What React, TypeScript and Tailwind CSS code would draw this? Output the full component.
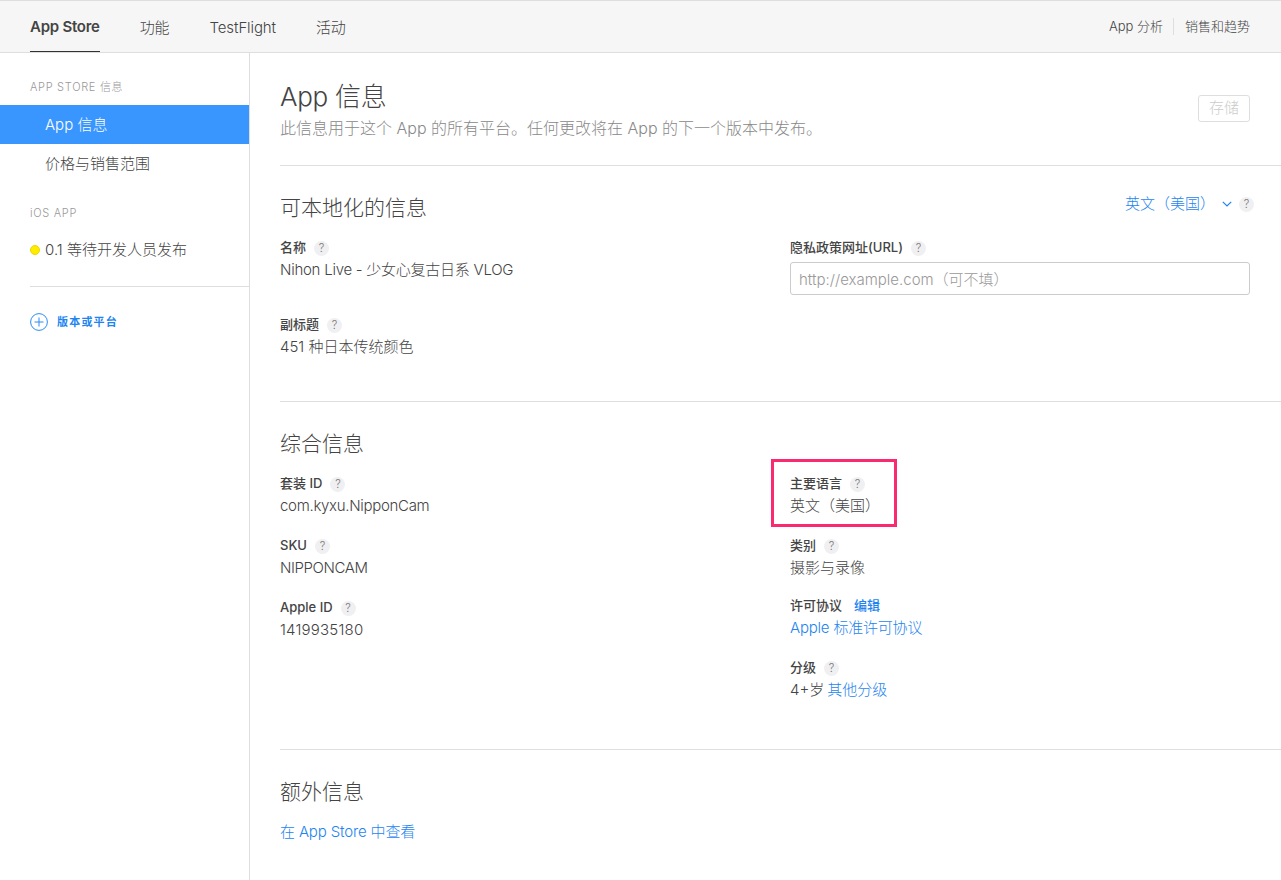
const font = "font-['Inter','Noto_Sans_CJK_SC',sans-serif]";

function Help() {
  return (
    <span className="ml-[8px] inline-flex h-[15px] w-[15px] items-center justify-center rounded-full bg-[#f0f0f2] text-[11px] font-light text-[#777]">
      ?
    </span>
  );
}

function Label({ children }: { children: React.ReactNode }) {
  return (
    <div className="flex h-[22px] items-center text-[13px] font-medium text-[#444]">
      {children}
      <Help />
    </div>
  );
}

function Value({ children, className = "" }: { children: React.ReactNode; className?: string }) {
  return <div className={`flex h-[22px] items-center text-[15px] font-light text-[#444] ${className}`}>{children}</div>;
}

function Field({ label, value, className }: { label: string; value: string; className?: string }) {
  return (
    <div className="mb-[18px]">
      <Label>{label}</Label>
      <Value className={className}>{value}</Value>
    </div>
  );
}

function Sidebar() {
  return (
    <aside className="w-[250px] shrink-0 border-r border-[#dedede]">
      <div className="flex h-[40px] items-end pl-[30px] text-[11px] font-light leading-[12px] tracking-[0.7px] text-[#999]">
        APP STORE 信息
      </div>
      <div className="mt-[12px] flex h-[39px] items-center bg-[#3a96ff] pl-[45px] pt-[2px] text-[15px] font-light text-white">
        App 信息
      </div>
      <div className="flex h-[39px] items-center pl-[45px] pt-[2px] text-[15px] font-light text-[#444]">价格与销售范围</div>
      <div className="mt-[24px] pl-[30px] text-[11px] font-light leading-[12px] tracking-[0.7px] text-[#999]">iOS APP</div>
      <div className="mt-[11px] flex h-[39px] items-center pl-[30px] pt-[2px] text-[15px] font-light text-[#444]">
        <span className="mb-[2px] mr-[5px] h-[10px] w-[10px] rounded-full border border-[#e6d800] bg-[#ffec00]" />
        0.1 等待开发人员发布
      </div>
      <div className="ml-[30px] mt-[17px] border-t border-[#dedede]" />
      <div className="ml-[30px] mt-[26px] flex items-center">
        <svg width="18" height="18" viewBox="0 0 18 18" fill="none" stroke="#2b8cf5" strokeWidth="1">
          <circle cx="9" cy="9" r="8.4" />
          <path d="M9 4.5v9M4.5 9h9" />
        </svg>
        <span className="ml-[9px] text-[11px] font-bold tracking-[1.2px] text-[#1d84f0]">版本或平台</span>
      </div>
    </aside>
  );
}

export default function App() {
  return (
    <div className={`${font} h-[880px] w-[1281px] overflow-hidden bg-white`}>
      <header className="flex h-[53px] items-center justify-between border-y border-[#dedede] bg-[#f6f6f6] pl-[30px] pr-[31px]">
        <nav className="flex h-full items-stretch gap-[40px] text-[15px] font-light tracking-[-0.1px] text-[#444]">
          <span className="flex items-center border-b border-[#333] pt-[3px] font-semibold tracking-[-0.25px]">App Store</span>
          <span className="flex items-center pt-[4px]">功能</span>
          <span className="flex items-center pt-[4px]">TestFlight</span>
          <span className="flex items-center pt-[4px]">活动</span>
        </nav>
        <div className="flex items-center text-[13px] font-light text-[#444]">
          <span>App 分析</span>
          <span className="ml-[10px] mr-[11px] h-[17px] border-l border-[#dedede]" />
          <span>销售和趋势</span>
        </div>
      </header>
      <div className="flex h-[827px]">
        <Sidebar />
        <main className="flex-1 pl-[30px]">
          <div className="flex h-[113px] items-start justify-between border-b border-[#dedede] pr-[31px]">
            <div>
              <h1 className="mt-[27px] text-[26px] font-light leading-[33px] tracking-[-0.3px] text-[#444]">App 信息</h1>
              <p className="text-[16px] font-light leading-[30px] text-[#888]">
                此信息用于这个 App 的所有平台。任何更改将在 App 的下一个版本中发布。
              </p>
            </div>
            <button className="mt-[42px] h-[27px] w-[52px] rounded-[3px] border border-[#dedede] text-[15px] font-light text-[#ccc]">
              存储
            </button>
          </div>

          <section className="h-[236px] border-b border-[#dedede] pr-[31px]">
            <div className="flex items-start justify-between">
              <h2 className="mt-[28px] text-[21px] font-light leading-[28px] text-[#444]">可本地化的信息</h2>
              <div className="mt-[27px] flex items-center text-[15px] font-light text-[#1d84f0]">
                英文（美国）
                <svg className="ml-[7px]" width="10" height="6" viewBox="0 0 10 6" fill="none" stroke="#1d84f0" strokeWidth="1.2">
                  <path d="M.8.8L5 5 9.2.8" />
                </svg>
                <span className="ml-[7px] mr-[-4px] flex h-[15px] w-[15px] items-center justify-center rounded-full bg-[#f0f0f2] text-[11px] font-light text-[#777]">
                  ?
                </span>
              </div>
            </div>
            <div className="mt-[15px] grid grid-cols-[510px_1fr]">
              <div>
                <div className="mb-[33px]">
                  <Label>名称</Label>
                  <Value className="tracking-[-0.25px]">Nihon Live - 少女心复古日系 VLOG</Value>
                </div>
                <Field label="副标题" value="451 种日本传统颜色" />
              </div>
              <div>
                <Label>隐私政策网址(URL)</Label>
                <input
                  readOnly
                  placeholder="http://example.com（可不填）"
                  className="mt-[3px] h-[33px] w-full rounded-[3px] border border-[#ccc] px-[8px] pt-[2px] text-[15px] font-light placeholder:text-[#999]"
                />
              </div>
            </div>
          </section>

          <section className="h-[320px] border-b border-[#dedede] pr-[31px]">
            <h2 className="mt-[28px] text-[21px] font-light leading-[28px] text-[#444]">综合信息</h2>
            <div className="mt-[15px] grid grid-cols-[510px_1fr]">
              <div>
                <Field label="套装 ID" value="com.kyxu.NipponCam" className="tracking-[-0.3px]" />
                <Field label="SKU" value="NIPPONCAM" className="tracking-[-0.4px]" />
                <Field label="Apple ID" value="1419935180" className="tracking-[0.2px]" />
              </div>
              <div>
                <div className="relative">
                  <Field label="主要语言" value="英文（美国）" />
                  <div className="absolute left-[-19px] top-[-14px] h-[68px] w-[126px] border-[3px] border-[#fb2a70]" />
                </div>
                <div className="mb-[16px]">
                  <Label>类别</Label>
                  <Value>摄影与录像</Value>
                </div>
                <div className="mb-[18px]">
                  <div className="flex h-[22px] items-center text-[13px] font-medium text-[#444]">
                    许可协议
                    <span className="ml-[12px] text-[#1d84f0]">编辑</span>
                  </div>
                  <div className="flex h-[22px] items-center text-[15px] font-light tracking-[-0.2px] text-[#1d84f0]">Apple 标准许可协议</div>
                </div>
                <div>
                  <Label>分级</Label>
                  <Value>
                    4+岁<span className="ml-[3px] text-[#1d84f0]">其他分级</span>
                  </Value>
                </div>
              </div>
            </div>
          </section>

          <section>
            <h2 className="mt-[28px] text-[21px] font-light leading-[28px] text-[#444]">额外信息</h2>
            <div className="mt-[15px] text-[15px] font-light leading-[22px] tracking-[-0.15px] text-[#1d84f0]">在 App Store 中查看</div>
          </section>
        </main>
      </div>
    </div>
  );
}
